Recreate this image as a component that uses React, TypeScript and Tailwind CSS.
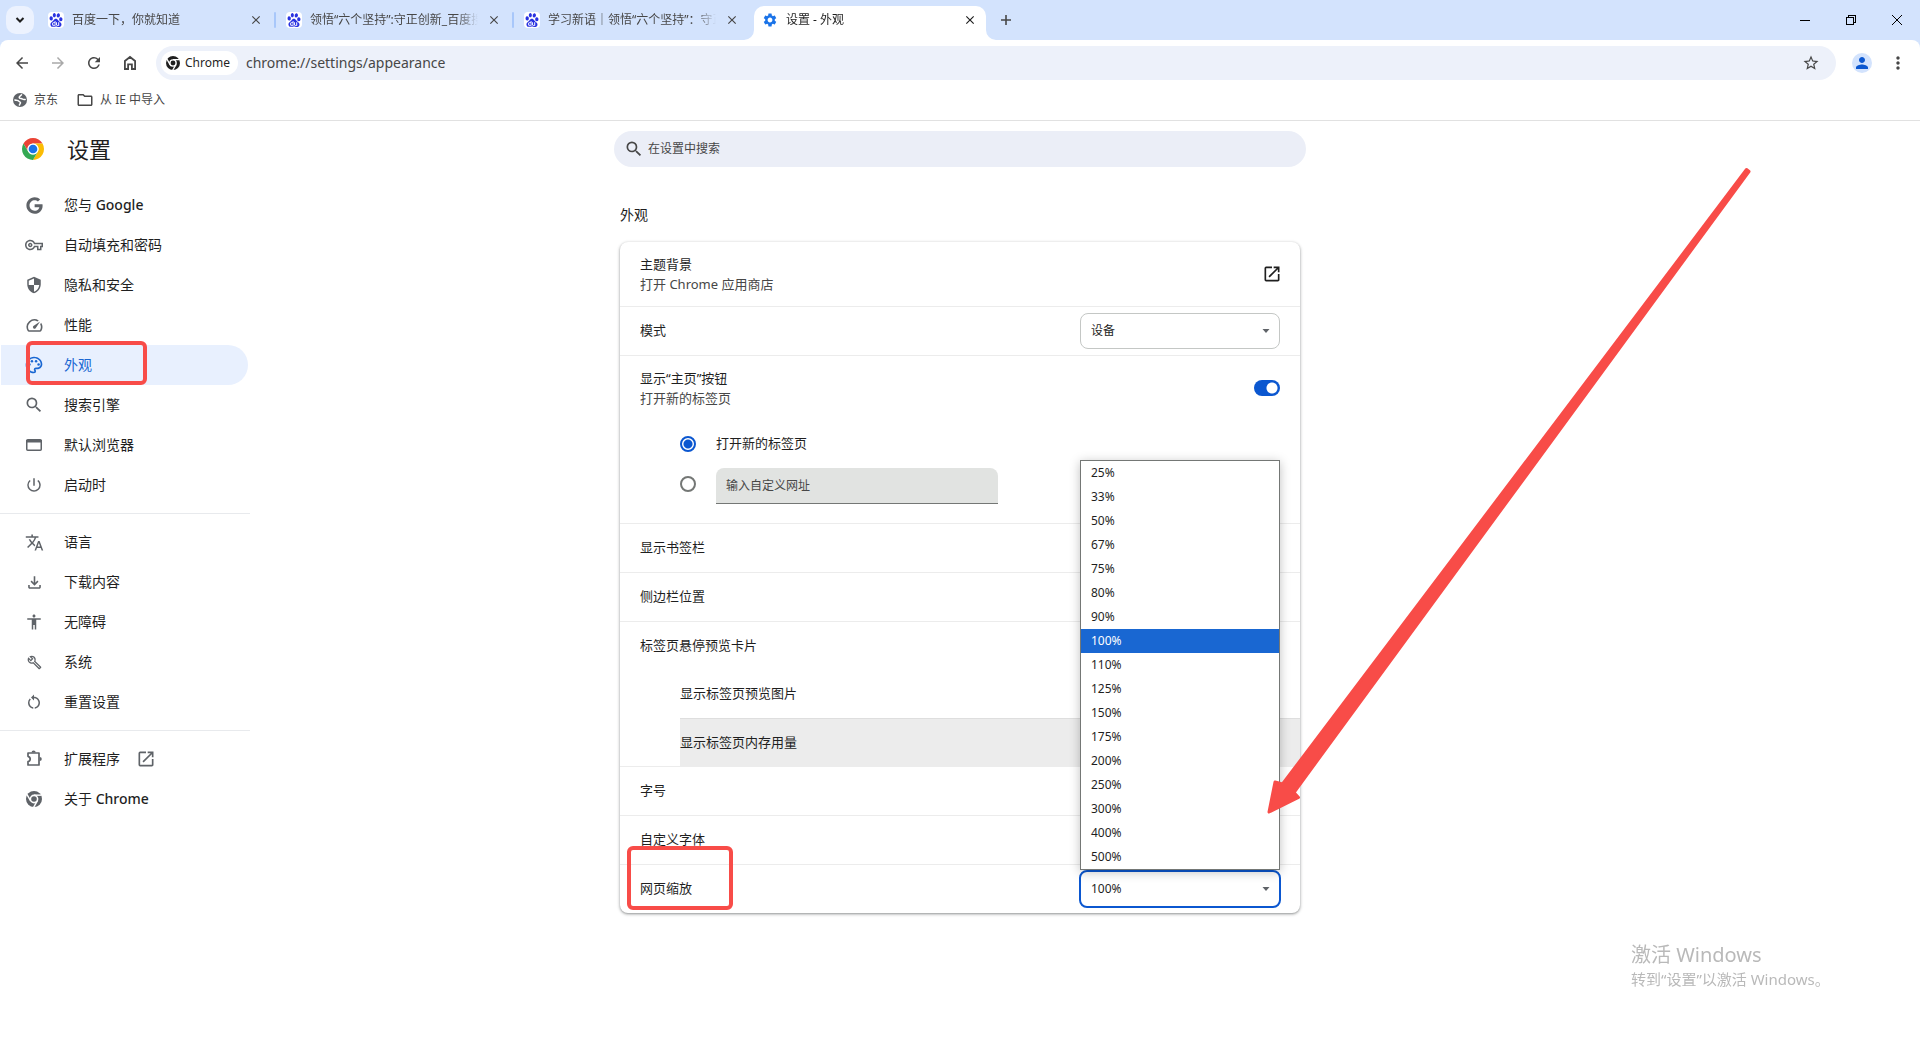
import type { ReactNode } from "react";
import { SiBaidu } from "react-icons/si";
import { FaGoogle } from "react-icons/fa";
import {
  MdAccessibility,
  MdArrowBack,
  MdArrowForward,
  MdClose,
  MdMoreVert,
  MdOpenInNew,
  MdOutlineBuild,
  MdOutlineFileDownload,
  MdOutlineFolder,
  MdOutlinePalette,
  MdOutlineSpeed,
  MdOutlineVpnKey,
  MdPerson,
  MdPowerSettingsNew,
  MdRefresh,
  MdRestartAlt,
  MdSearch,
  MdSecurity,
  MdSettings,
  MdStarOutline,
  MdTranslate,
} from "react-icons/md";

const zoomLevels = [
  "25%", "33%", "50%", "67%", "75%", "80%", "90%", "100%", "110%",
  "125%", "150%", "175%", "200%", "250%", "300%", "400%", "500%",
];

function BaiduIcon() {
  return (
    <span className="flex size-4 shrink-0 items-center justify-center rounded-sm bg-white text-[#2932e1]">
      <SiBaidu size={14} />
    </span>
  );
}

function HomeIcon() {
  return (
    <svg width="20" height="20" viewBox="0 0 20 20" fill="none" stroke="currentColor" strokeWidth="1.8">
      <path d="M4.900 16V8L10 4l5.100 4v8h-3.200v-4.600H8.100V16z" />
    </svg>
  );
}

function ExtensionIcon() {
  return (
    <svg width="18" height="18" viewBox="0 0 18 18">
      <path
        d="M3 3h11v12H3v-3.300c1.400-.3 2.200-1.300 2.200-2.700S4.400 6.600 3 6.300z"
        fill="none"
        stroke="currentColor"
        strokeWidth="1.700"
        strokeLinejoin="round"
      />
      <path d="M6.500 2.500a2.100 2.100 0 0 1 4.200 0zM14.700 6.900a2.100 2.100 0 0 1 0 4.200z" fill="currentColor" />
    </svg>
  );
}

function WindowIcon() {
  return (
    <svg width="16" height="12" viewBox="0 0 16 12">
      <rect x="0.750" y="0.750" width="14.500" height="10.500" rx="1" fill="none" stroke="currentColor" strokeWidth="1.500" />
      <path d="M0 1h16v2.500H0z" fill="currentColor" />
    </svg>
  );
}

function GlobeIcon() {
  return (
    <svg width="14" height="14" viewBox="0 0 14 14" className="text-[#5f6368]">
      <circle cx="7" cy="7" r="7" fill="currentColor" />
      <path
        d="M8.500 1.800C7.500 3 6.200 2.900 6.200 4.400c0 1.300 2.200.9 3.200 1.600.8.600 1.500.6 2.800.4M1.900 7c1.600.4 3.300.2 3.900 1.200.5.900 1.800.5 1.700 1.600-.1.900-1 1-1.100 2.300"
        fill="none"
        stroke="#fff"
        strokeWidth="1.500"
        strokeLinecap="round"
      />
    </svg>
  );
}

function ChromeMark({ large = false }: { large?: boolean }) {
  return (
    <svg width={large ? 16 : 14} height={large ? 16 : 14} viewBox="0 0 20 20">
      <circle cx="10" cy="10" r="10" fill="currentColor" />
      <g stroke="#fff" strokeWidth="1.800">
        <path d="M10 5.200h9.500" />
        <path d="M10 5.200h9.500" transform="rotate(120 10 10)" />
        <path d="M10 5.200h9.500" transform="rotate(240 10 10)" />
      </g>
      <circle cx="10" cy="10" r="5.500" fill="#fff" />
      <circle cx="10" cy="10" r="3.500" fill="currentColor" />
    </svg>
  );
}

function ChromeLogo() {
  return (
    <svg width="24" height="24" viewBox="0 0 48 48">
      <circle cx="24" cy="24" r="22" fill="#fff" />
      <path d="M4.950 13A22 22 0 0 1 43.050 13H24a11 11 0 0 0-9.530 16.500z" fill="#ea4335" />
      <path d="M43.050 13A22 22 0 0 1 24 46l9.530-16.500A11 11 0 0 0 24 13z" fill="#fbbc04" />
      <path d="M24 46A22 22 0 0 1 4.950 13l9.520 16.500A11 11 0 0 0 33.530 29.500z" fill="#34a853" />
      <circle cx="24" cy="24" r="11" fill="#fff" />
      <circle cx="24" cy="24" r="8.700" fill="#1a73e8" />
    </svg>
  );
}

function Tab({ icon, title, active = false, divider = true }: { icon: ReactNode; title: string; active?: boolean; divider?: boolean }) {
  return (
    <div
      className={
        active
          ? "relative flex h-[34px] w-[232px] items-center gap-2 self-end rounded-t-[10px] bg-white pr-2 pb-1.5 pl-2 text-[#1f1f1f]"
          : "flex h-7 w-[238px] items-center gap-2 pr-0.5 pl-2 text-[#474747]"
      }
    >
      {active && (
        <>
          <svg className="absolute bottom-0 -left-2.5" width="10" height="10" viewBox="0 0 10 10">
            <path d="M10 0v10H0A10 10 0 0 0 10 0z" fill="#fff" />
          </svg>
          <svg className="absolute -right-2.5 bottom-0" width="10" height="10" viewBox="0 0 10 10">
            <path d="M0 0v10h10A10 10 0 0 1 0 0z" fill="#fff" />
          </svg>
        </>
      )}
      {icon}
      <span className="min-w-0 flex-1 overflow-hidden whitespace-nowrap [mask-image:linear-gradient(to_right,black_88%,transparent)]">
        {title}
      </span>
      <button type="button" aria-label="关闭标签页" className="flex size-4 shrink-0 items-center justify-center">
        <MdClose size={14} />
      </button>
      {!active && (
        <span className={divider ? "ml-0.5 h-4 w-0.5 shrink-0 rounded bg-[#a8c7fa]" : "ml-0.5 h-4 w-0.5 shrink-0"} />
      )}
    </div>
  );
}

function IconButton({ label, children, faded = false }: { label: string; children: ReactNode; faded?: boolean }) {
  return (
    <button
      type="button"
      aria-label={label}
      className={faded ? "flex size-9 items-center justify-center text-[#a9a9a9]" : "flex size-9 items-center justify-center text-[#474747]"}
    >
      {children}
    </button>
  );
}

function BrowserChrome() {
  return (
    <header className="bg-[#d3e3fd] text-xs">
      <div className="flex h-10 items-center">
        <button type="button" aria-label="搜索标签页" className="ml-1.5 flex size-7 items-center justify-center rounded-[10px] bg-[#ecf2fe]">
          <svg width="10" height="8" viewBox="0 0 10 8" fill="none" stroke="#1f1f1f" strokeWidth="2">
            <path d="M1.500 2 5 5.500 8.500 2" />
          </svg>
        </button>
        <div className="ml-1.5 flex h-10 items-center">
          <Tab icon={<BaiduIcon />} title="百度一下，你就知道" />
          <Tab icon={<BaiduIcon />} title="领悟“六个坚持”:守正创新_百度搜" />
          <Tab icon={<BaiduIcon />} title="学习新语｜领悟“六个坚持”：守正" divider={false} />
          <Tab icon={<MdSettings size={16} className="shrink-0 text-[#1a73e8]" />} title="设置 - 外观" active />
        </div>
        <button type="button" aria-label="新标签页" className="ml-1.5 flex size-7 items-center justify-center text-[#474747]">
          <svg width="10" height="10" viewBox="0 0 10 10" stroke="currentColor" strokeWidth="1.600">
            <path d="M5 0v10M0 5h10" />
          </svg>
        </button>
        <div className="ml-auto flex text-black">
          <button type="button" aria-label="最小化" className="flex h-10 w-[46px] items-center justify-center">
            <svg width="10" height="10" viewBox="0 0 10 10" stroke="currentColor" shapeRendering="crispEdges">
              <path d="M0 5.500h10" />
            </svg>
          </button>
          <button type="button" aria-label="还原" className="flex h-10 w-[46px] items-center justify-center">
            <svg width="10" height="10" viewBox="0 0 10 10" fill="none" stroke="currentColor" shapeRendering="crispEdges">
              <path d="M.5 2.500h7v7h-7zM2.500 2.500v-2h7v7h-2" />
            </svg>
          </button>
          <button type="button" aria-label="关闭" className="flex h-10 w-[46px] items-center justify-center">
            <svg width="10" height="10" viewBox="0 0 10 10" stroke="currentColor">
              <path d="M0 0l10 10M10 0 0 10" />
            </svg>
          </button>
        </div>
      </div>

      <div className="rounded-t-lg border-b border-[#e1e1e1] bg-white">
        <div className="flex h-[46px] items-center px-1">
          <IconButton label="后退"><MdArrowBack size={18} /></IconButton>
          <IconButton label="前进" faded><MdArrowForward size={18} /></IconButton>
          <IconButton label="重新加载"><MdRefresh size={18} /></IconButton>
          <IconButton label="主页"><HomeIcon /></IconButton>
          <div className="ml-2 flex h-[34px] flex-1 items-center rounded-full bg-[#edf1fa] pr-4 pl-[5px]">
            <button type="button" className="flex h-6 items-center gap-[5px] rounded-full bg-white pr-2 pl-[5px] text-[#1f1f1f]">
              <ChromeMark />
              <span className="text-xs">Chrome</span>
            </button>
            <input
              aria-label="地址和搜索栏"
              className="ml-2 min-w-0 flex-1 bg-transparent text-sm text-[#474747] outline-none"
              defaultValue="chrome://settings/appearance"
            />
            <button type="button" aria-label="为此标签页添加书签" className="text-[#474747]">
              <MdStarOutline size={18} />
            </button>
          </div>
          <button type="button" aria-label="个人资料" className="ml-4 flex size-5 items-center justify-center rounded-full bg-[#d3e3fd] text-[#0b57d0]">
            <MdPerson size={18} />
          </button>
          <span className="ml-2"><IconButton label="自定义及控制"><MdMoreVert size={20} /></IconButton></span>
        </div>
        <nav className="flex h-[34px] items-start gap-[18px] pt-1 pl-[13px] text-[#474747]" aria-label="书签">
          <a href="#jd" className="flex h-5 items-center gap-[7px]"><GlobeIcon />京东</a>
          <a href="#ie" className="flex h-5 items-center gap-1.5"><MdOutlineFolder size={18} />从 IE 中导入</a>
        </nav>
      </div>
    </header>
  );
}

function NavItem({
  icon,
  label,
  latin,
  active = false,
  external = false,
}: {
  icon: ReactNode;
  label: string;
  latin?: string;
  active?: boolean;
  external?: boolean;
}) {
  return (
    <a
      href={"#" + label}
      aria-current={active ? "page" : undefined}
      className={
        active
          ? "relative ml-px flex h-10 w-[247px] items-center rounded-r-full bg-[#e8f0fe] pl-[23px] text-[#1967d2]"
          : "flex h-10 w-[248px] items-center pl-6 text-[#1f1f1f]"
      }
    >
      <span className={active ? "flex w-10 items-center" : "flex w-10 items-center text-[#5f6368]"}>
        <span className="flex size-5 items-center justify-center">{icon}</span>
      </span>
      <span>
        {label}
        {latin && <span className="font-medium"> {latin}</span>}
      </span>
      {external && <MdOpenInNew size={20} className="ml-4 text-[#5f6368]" />}
      {active && (
        <span className="absolute -top-1 left-[25px] h-11 w-[121px] rounded-md border-4 border-[#f84c48]" />
      )}
    </a>
  );
}

function Sidebar() {
  return (
    <nav className="pt-2 text-sm" aria-label="设置">
      <NavItem icon={<FaGoogle size={17} />} label="您与" latin="Google" />
      <NavItem icon={<MdOutlineVpnKey size={18} />} label="自动填充和密码" />
      <NavItem icon={<MdSecurity size={18} />} label="隐私和安全" />
      <NavItem icon={<MdOutlineSpeed size={19} />} label="性能" />
      <NavItem icon={<MdOutlinePalette size={20} />} label="外观" active />
      <NavItem icon={<MdSearch size={20} />} label="搜索引擎" />
      <NavItem icon={<WindowIcon />} label="默认浏览器" />
      <NavItem icon={<MdPowerSettingsNew size={18} />} label="启动时" />
      <hr className="my-2 w-[250px] border-[#e8eaed]" />
      <NavItem icon={<MdTranslate size={19} />} label="语言" />
      <NavItem icon={<MdOutlineFileDownload size={19} />} label="下载内容" />
      <NavItem icon={<MdAccessibility size={18} />} label="无障碍" />
      <NavItem icon={<MdOutlineBuild size={15} />} label="系统" />
      <NavItem icon={<MdRestartAlt size={18} />} label="重置设置" />
      <hr className="my-2 w-[250px] border-[#e8eaed]" />
      <NavItem icon={<ExtensionIcon />} label="扩展程序" external />
      <NavItem icon={<ChromeMark large />} label="关于" latin="Chrome" />
    </nav>
  );
}

function Caret() {
  return (
    <svg className="pointer-events-none absolute top-1/2 right-2.5 -translate-y-1/2" width="8" height="4" viewBox="0 0 8 4">
      <path d="M.5 0h7L4 4z" fill="#5f6368" />
    </svg>
  );
}

function Row({ label }: { label: string }) {
  return <div className="flex h-[49px] items-center border-t border-[#ececec] px-5">{label}</div>;
}

function AppearanceCard() {
  return (
    <section className="relative rounded-lg bg-white text-[13px] text-[#1f1f1f] shadow-[0_1px_3px_1px_rgba(60,64,67,0.2),0_1px_2px_rgba(60,64,67,0.35)]">
      <div className="flex h-16 items-center justify-between px-5">
        <div className="leading-5">
          <div>主题背景</div>
          <div className="text-[#474747]">打开 Chrome 应用商店</div>
        </div>
        <button type="button" aria-label="打开 Chrome 应用商店" className="-mr-0.5"><MdOpenInNew size={20} /></button>
      </div>

      <div className="flex h-[49px] items-center justify-between border-t border-[#ececec] px-5">
        <label htmlFor="mode">模式</label>
        <div className="relative">
          <select id="mode" className="h-9 w-[200px] appearance-none rounded-lg border border-[#c4c7c5] bg-white px-2.5 text-xs">
            <option>设备</option>
          </select>
          <Caret />
        </div>
      </div>

      <div className="border-t border-[#ececec] px-5 pb-[19px]">
        <div className="flex h-16 items-center justify-between">
          <label htmlFor="home-button" className="leading-5">
            <span className="block">显示“主页”按钮</span>
            <span className="block text-[#474747]">打开新的标签页</span>
          </label>
          <input
            id="home-button"
            type="checkbox"
            role="switch"
            defaultChecked
            className="h-4 w-[26px] appearance-none rounded-full bg-[#0b57d0] bg-[radial-gradient(circle_at_18px_8px,white_5px,transparent_6px)]"
          />
        </div>
        <div className="pt-1 pl-10">
          <label className="flex h-10 items-center gap-5">
            <input
              type="radio"
              name="home"
              defaultChecked
              className="size-4 appearance-none rounded-full border-2 border-[#0b57d0] bg-[radial-gradient(circle,#0b57d0_4px,transparent_5px)]"
            />
            打开新的标签页
          </label>
          <div className="flex h-10 items-end gap-5">
            <input type="radio" name="home" aria-label="输入自定义网址" className="mb-3 size-4 appearance-none rounded-full border-2 border-[#747775]" />
            <input
              aria-label="自定义网址"
              placeholder="输入自定义网址"
              className="h-9 w-[282px] rounded-t-lg border-b border-[#747775] bg-[#e1e3e1] px-2.5 text-xs placeholder:text-[#474747]"
            />
          </div>
        </div>
      </div>

      <Row label="显示书签栏" />
      <Row label="侧边栏位置" />
      <Row label="标签页悬停预览卡片" />
      <div className="flex h-12 items-center pl-[60px]">显示标签页预览图片</div>
      <div className="ml-[60px] flex h-12 items-center border-t border-[#dedede] bg-[#ececec]">显示标签页内存用量</div>
      <Row label="字号" />
      <Row label="自定义字体" />
      <div className="relative flex h-[49px] items-center justify-between border-t border-[#ececec] px-5">
        <label htmlFor="zoom">网页缩放</label>
        <span className="absolute -top-[19px] left-[7px] h-16 w-[106px] rounded-md border-4 border-[#f84c48]" />
        <div className="relative">
          <select
            id="zoom"
            defaultValue="100%"
            className="-mx-px block h-[38px] w-[202px] appearance-none rounded-lg border-2 border-[#0b57d0] bg-white px-2.5 text-xs"
          >
            {zoomLevels.map((z) => <option key={z}>{z}</option>)}
          </select>
          <Caret />
          <ul
            role="listbox"
            aria-label="网页缩放"
            className="absolute bottom-full left-0 w-[200px] border border-[#747775] bg-white text-xs shadow-[0_2px_10px_rgba(0,0,0,0.25)]"
          >
            {zoomLevels.map((z) => (
              <li
                key={z}
                role="option"
                aria-selected={z === "100%"}
                className={z === "100%" ? "flex h-6 items-center bg-[#1967d2] px-2.5 text-white" : "flex h-6 items-center px-2.5"}
              >
                {z}
              </li>
            ))}
          </ul>
        </div>
      </div>

      <svg className="pointer-events-none absolute -top-[82px] left-[640px]" width="500" height="670" viewBox="0 0 500 670" aria-hidden="true">
        <path
          d="M486.500 9.500l2.500 2L34 632.500l4.500 5L9 652 15 622l7.500 2z"
          fill="#f84c48"
          stroke="#f84c48"
          strokeWidth="3"
          strokeLinejoin="round"
        />
      </svg>
    </section>
  );
}

export default function App() {
  return (
    <div className="min-h-screen bg-white font-['Noto_Sans','Noto_Sans_CJK_SC',sans-serif]">
      <BrowserChrome />
      <div className="grid h-14 grid-cols-[1fr_692px_1fr] items-center">
        <div className="flex items-center gap-[22px] pl-[21px]">
          <ChromeLogo />
          <h1 className="text-[22px] leading-8 text-[#1f1f1f]">设置</h1>
        </div>
        <label className="flex h-9 items-center gap-1 rounded-full bg-[#ebeef7] pl-2.5 text-xs text-[#474747]">
          <MdSearch size={20} />
          <input type="search" aria-label="搜索设置" placeholder="在设置中搜索" className="flex-1 bg-transparent outline-none placeholder:text-[#474747]" />
        </label>
      </div>
      <div className="grid grid-cols-[1fr_680px_1fr]">
        <Sidebar />
        <main>
          <h2 className="pt-7 pb-[17px] text-sm leading-5 text-[#1f1f1f]">外观</h2>
          <AppearanceCard />
        </main>
      </div>
      <div className="fixed right-[84px] bottom-[49px] w-[205px] whitespace-nowrap text-[#b9b9b9]">
        <div className="text-xl leading-6">激活 Windows</div>
        <div className="text-[15px] leading-6">转到“设置”以激活 Windows。</div>
      </div>
    </div>
  );
}
